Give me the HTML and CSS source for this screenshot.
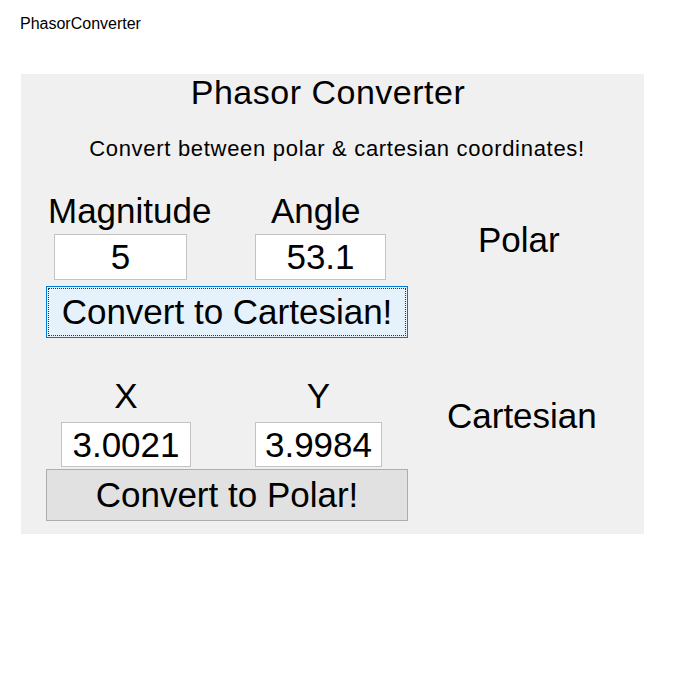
FILE: index.html
```html
<!DOCTYPE html>
<html lang="en">
<head>
    <meta charset="UTF-8">
    <title>PhasorConverter</title>
    <link rel="stylesheet" href="styles.css">
</head>
<body>
    <div class="window-title">PhasorConverter</div>

    <div class="form">
        <h1 class="heading">Phasor Converter</h1>
        <p class="subtitle">Convert between polar &amp; cartesian coordinates!</p>

        <div class="section polar">
            <div class="group">
                <div class="fields">
                    <div class="field mag">
                        <label class="label" for="mag">Magnitude</label>
                        <input class="box" type="text" id="mag" value="5">
                    </div>
                    <div class="field ang">
                        <label class="label" for="ang">Angle</label>
                        <input class="box" type="text" id="ang" value="53.1">
                    </div>
                </div>
                <button class="btn focused" id="toCart">Convert to Cartesian!</button>
            </div>
            <div class="side">Polar</div>
        </div>

        <div class="section cart">
            <div class="group">
                <div class="fields">
                    <div class="field xf">
                        <label class="label" for="x">X</label>
                        <input class="box" type="text" id="x" value="3.0021">
                    </div>
                    <div class="field yf">
                        <label class="label" for="y">Y</label>
                        <input class="box" type="text" id="y" value="3.9984">
                    </div>
                </div>
                <button class="btn" id="toPolar">Convert to Polar!</button>
            </div>
            <div class="side">Cartesian</div>
        </div>
    </div>
</body>
</html>
```

FILE: styles.css
```css
body {
    margin: 0;
    font-family: "Liberation Sans", Arial, sans-serif;
    color: #000;
    background: #fff;
}
.window-title {
    padding: 15px 0 0 20px;
    font-size: 16px;
    line-height: 18px;
}
.form {
    margin: 41px 0 0 21px;
    width: 623px;
    height: 460px;
    background: #f0f0f0;
    box-sizing: border-box;
}
.heading {
    margin: 0;
    padding-right: 9px;
    font-size: 34px;
    line-height: 36px;
    font-weight: normal;
    letter-spacing: 0.5px;
    text-align: center;
}
.subtitle {
    margin: 26px 0 0;
    padding-left: 9px;
    font-size: 22px;
    line-height: 26px;
    letter-spacing: 0.7px;
    text-align: center;
}
.section {
    display: flex;
    align-items: flex-start;
}
.polar {
    margin-top: 29px;
}
.cart {
    margin-top: 38px;
}
.group {
    margin-left: 25px;
    width: 362px;
}
.fields {
    display: flex;
}
.field {
    display: flex;
    flex-direction: column;
    align-items: flex-start;
    flex: none;
}
.label {
    font-size: 35px;
    line-height: 40px;
    white-space: nowrap;
}
.box {
    display: block;
    margin: 0;
    width: 100%;
    height: 46px;
    padding: 0;
    box-sizing: border-box;
    border: 1px solid #c3c3c3;
    background: #fff;
    font-family: "Liberation Sans", Arial, sans-serif;
    font-size: 35px;
    color: #000;
    text-align: center;
    outline: none;
}
.polar .label {
    margin-bottom: 3px;
}
.mag {
    width: 133px;
    margin-left: 8px;
}
.mag .label {
    margin-left: -6px;
}
.ang {
    width: 131px;
    margin-left: 68px;
}
.ang .label {
    margin-left: 16px;
}
.cart .field {
    align-items: center;
}
.cart .label {
    margin-bottom: 6px;
}
.cart .box {
    height: 45px;
}
.xf {
    width: 130px;
    margin-left: 15px;
}
.yf {
    width: 127px;
    margin-left: 64px;
}
.btn {
    display: block;
    width: 362px;
    height: 52px;
    margin: 0;
    padding: 0;
    border: 1px solid #adadad;
    background: #e1e1e1;
    font-family: "Liberation Sans", Arial, sans-serif;
    font-size: 35px;
    color: #000;
    text-align: center;
    cursor: pointer;
}
.polar .btn {
    margin-top: 6px;
}
.cart .btn {
    margin-top: 2px;
}
.btn.focused {
    background: #e5f1fb;
    border-color: #0078d7;
    outline: 1px dotted #333;
    outline-offset: -3px;
}
.side {
    font-size: 35px;
    line-height: 40px;
}
.polar .side {
    margin: 29px 0 0 70px;
}
.cart .side {
    margin: 20px 0 0 39px;
}
```
